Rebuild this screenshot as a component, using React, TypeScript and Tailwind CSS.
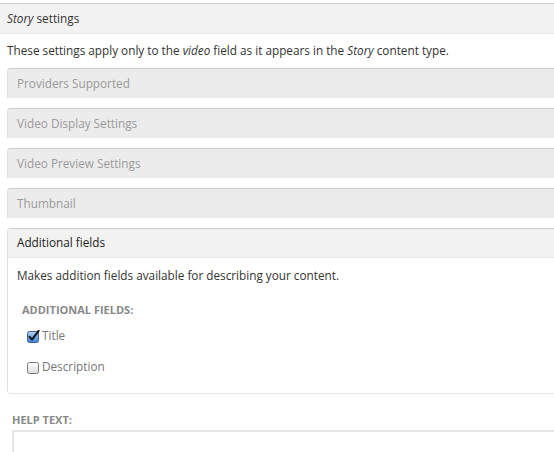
import React from 'react';

const collapsed = ['Providers Supported', 'Video Display Settings', 'Video Preview Settings', 'Thumbnail'];

const CheckBox: React.FC<{ checked?: boolean }> = ({ checked }) =>
    checked ? (
        <svg width="13" height="13" viewBox="0 0 13 13" className="shrink-0">
            <defs>
                <linearGradient id="cbBlue" x1="0" y1="0" x2="0" y2="1">
                    <stop offset="0" stopColor="#bcd9f7" />
                    <stop offset="0.5" stopColor="#6fa8e6" />
                    <stop offset="1" stopColor="#3d86dc" />
                </linearGradient>
            </defs>
            <rect x="0.5" y="1.5" width="11" height="11" rx="2" fill="url(#cbBlue)" stroke="#3c5f8c" />
            <path d="M2.6 6.8 L5 9.6 L11.6 0.8" fill="none" stroke="#111" strokeWidth="2" strokeLinecap="round" strokeLinejoin="round" />
        </svg>
    ) : (
        <svg width="13" height="13" viewBox="0 0 13 13" className="shrink-0">
            <defs>
                <linearGradient id="cbGray" x1="0" y1="0" x2="0" y2="1">
                    <stop offset="0" stopColor="#ffffff" />
                    <stop offset="1" stopColor="#dcdcdc" />
                </linearGradient>
            </defs>
            <rect x="0.5" y="1.5" width="11" height="11" rx="2" fill="url(#cbGray)" stroke="#777" />
        </svg>
    );

const App: React.FC = () => {
    return (
        <div className="w-full h-[452px] overflow-hidden bg-white font-['Open_Sans',sans-serif] text-[11.75px] text-[#333]">
            <div className="w-[600px] pt-[3px]">
                {/* Page header */}
                <div className="h-[31px] flex items-center px-[7px] bg-[#f2f2f2] border-t border-[#cccccc] border-b border-b-[#e8e8e8]">
                    <span><em>Story</em> settings</span>
                </div>
                <p className="h-[34px] flex items-center px-[7px]">
                    <span>These settings apply only to the <em>video</em> field as it appears in the <em>Story</em> content type.</span>
                </p>

                <div className="pl-[7px] flex flex-col gap-[10px]">
                    {collapsed.map(title => (
                        <div
                            key={title}
                            className="h-[30px] flex items-center pl-[9px] bg-[#ececec] text-[#9a9a9a] border-t border-l border-t-[#cccccc] border-l-[#e0e0e0] rounded-tl-[4px]"
                        >
                            {title}
                        </div>
                    ))}

                    {/* Expanded fieldset */}
                    <div className="border-t border-l border-b border-t-[#cccccc] border-l-[#e0e0e0] border-b-[#e6e6e6] rounded-tl-[4px] rounded-bl-[4px]">
                        <div className="h-[29px] flex items-center pl-[9px] bg-[#f2f2f2] border-b border-[#e8e8e8] text-[#222]">
                            Additional fields
                        </div>
                        <div className="pl-[9px] pb-[16px]">
                            <p className="h-[36px] flex items-center">Makes addition fields available for describing your content.</p>
                            <div className="h-[32px] flex items-center pl-[5px] text-[11px] font-bold text-[#888]">ADDITIONAL FIELDS:</div>
                            <div className="flex flex-col gap-[11px] pl-[10px] text-[#777]">
                                <label className="h-[20px] flex items-center gap-[2px]">
                                    <CheckBox checked />
                                    <span>Title</span>
                                </label>
                                <label className="h-[20px] flex items-center gap-[2px]">
                                    <CheckBox />
                                    <span>Description</span>
                                </label>
                            </div>
                        </div>
                    </div>
                </div>

                {/* Help text */}
                <div className="pl-[12px] pt-[16px]">
                    <div className="h-[20px] flex items-center text-[11px] font-bold text-[#888]">HELP TEXT:</div>
                    <div className="h-[40px] border-2 border-[#e6e6e6] border-r-0 bg-white" />
                </div>
            </div>
        </div>
    );
};

export default App;
